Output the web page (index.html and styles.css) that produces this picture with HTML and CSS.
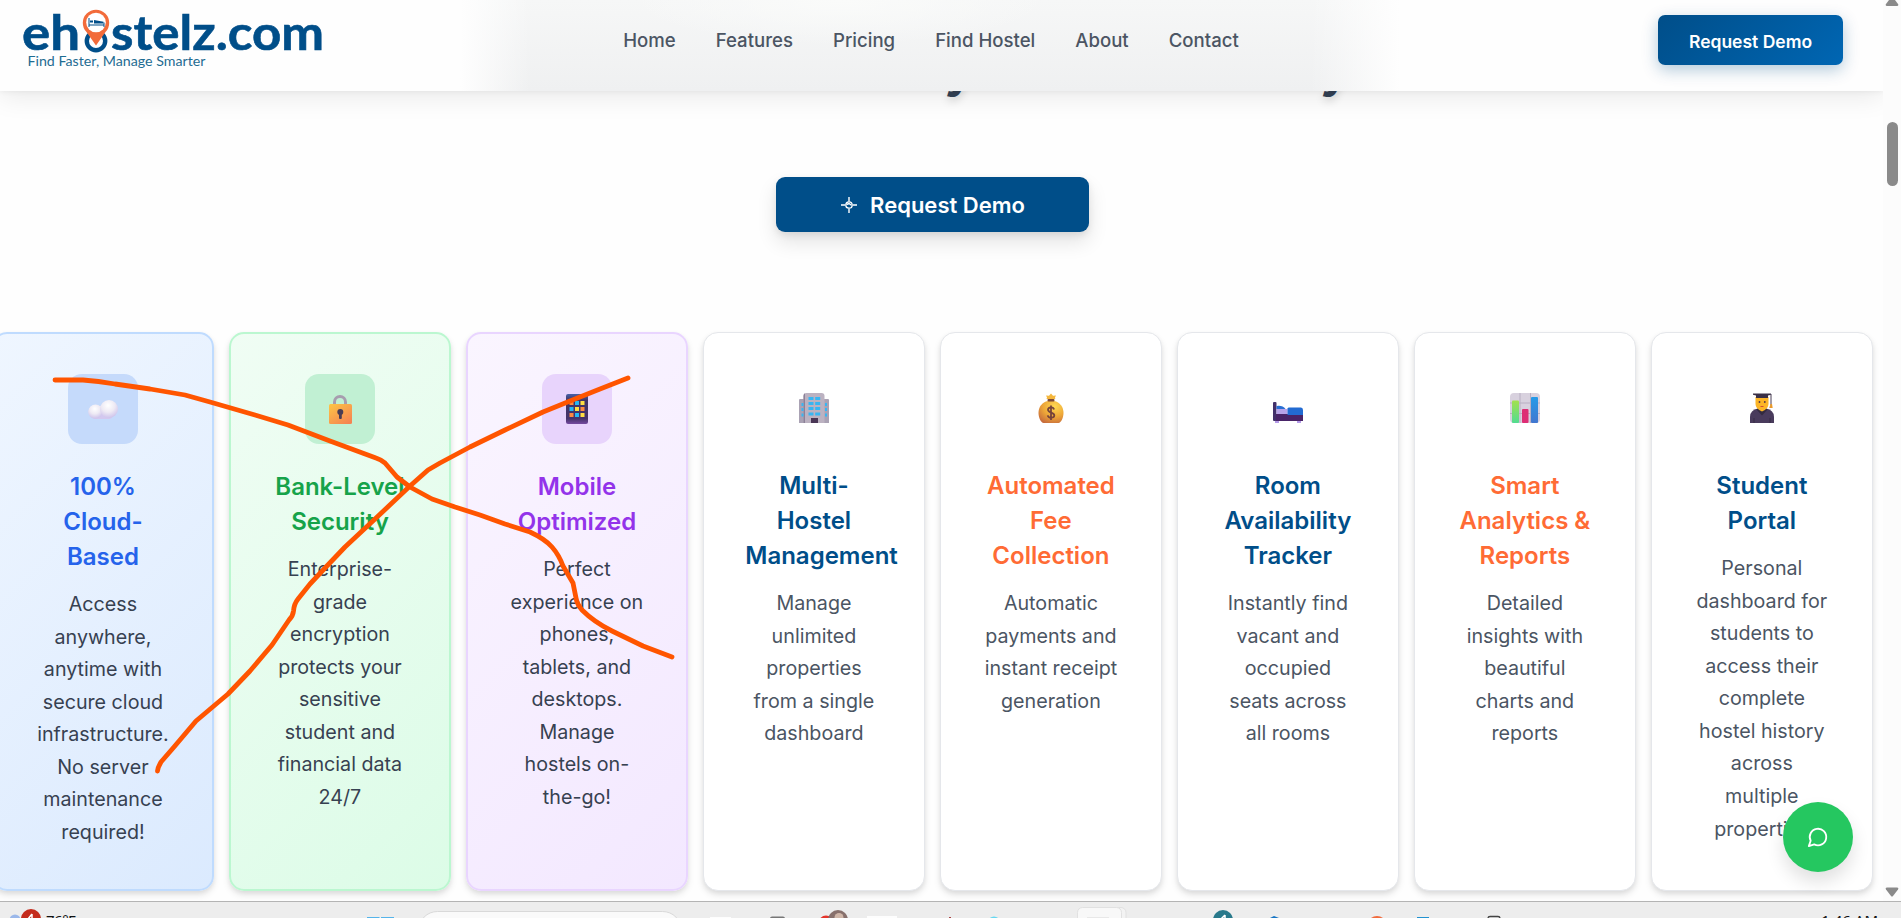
FILE: index.html
```html
<!DOCTYPE html>
<html lang="en">
<head>
<meta charset="utf-8">
<title>ehostelz.com</title>
<link rel="stylesheet" href="styles.css">
</head>
<body>
<div class="screen">
  <div class="page">
    <header class="header">
      <svg class="logo" viewBox="0 0 310 64" width="310" height="64">
        <circle cx="77" cy="37" r="9.2" fill="none" stroke="#004e89" stroke-width="4.4"/>
        <g class="logo-name">
          <text x="3" y="46" textLength="58" lengthAdjust="spacingAndGlyphs">eh</text>
          <text x="92" y="46" textLength="213" lengthAdjust="spacingAndGlyphs">stelz.com</text>
        </g>
        <path d="M77 41.500 L67.500 28 A13.200 13.200 0 1 1 86.500 28Z" fill="#f26b3a"/>
        <circle cx="77" cy="18.500" r="9.800" fill="#fff"/>
        <path d="M70 14v9M70 21h15M85 18.500V23" fill="none" stroke="#004e89" stroke-width="1"/>
        <path d="M71 16.500h3v2h-3zM75 16l9.500 1.800v1.700H75z" fill="#004e89"/>
        <text class="logo-tag" x="8.500" y="61.500" textLength="178" lengthAdjust="spacingAndGlyphs">Find Faster, Manage Smarter</text>
      </svg>
      <nav class="nav">
        <a>Home</a><a>Features</a><a>Pricing</a><a>Find Hostel</a><a>About</a><a>Contact</a>
      </nav>
      <a class="header-cta">Request Demo</a>
    </header>

    <section class="hero">
      <div class="hero-title"><span>y</span><span>y</span></div>
      <a class="hero-cta">
        <svg width="18" height="18" viewBox="0 0 18 18" fill="none" stroke="#fff">
          <circle cx="9" cy="9" r="3.200" stroke-width="1.300"/>
          <path d="M9 1v4.500M9 12.500V17M1 9h4M13 9h4M6.500 8.500l2.500-1 2.500 1.800" stroke-width="1.400"/>
        </svg>
        Request Demo
      </a>
    </section>

    <section class="cards">
      <article class="card tinted blue">
        <div class="icon"><svg width="30" height="30" viewBox="0 0 30 30">
          <defs><radialGradient id="cl" cx=".45" cy=".3" r=".75"><stop offset="0" stop-color="#fff"/><stop offset=".5" stop-color="#eeeaf4"/><stop offset="1" stop-color="#c9bdea"/></radialGradient></defs>
          <path d="M7 25a7 7 0 1 1 4-13l7 0v13z" fill="url(#cl)"/><rect x="5" y="19" width="19" height="6" rx="3" fill="#d3c8ef"/><circle cx="7.500" cy="17.500" r="7" fill="url(#cl)"/><circle cx="21" cy="15" r="9" fill="url(#cl)"/></svg></div>
        <h3>100%<br>Cloud-<br>Based</h3>
        <p>Access<br>anywhere,<br>anytime with<br>secure cloud<br>infrastructure.<br>No server<br>maintenance<br>required!</p>
      </article>
      <article class="card tinted green">
        <div class="icon"><svg width="30" height="30" viewBox="0 0 30 30">
          <defs><linearGradient id="lk" x1="0" y1="0" x2=".8" y2="1"><stop offset="0" stop-color="#fdc645"/><stop offset="1" stop-color="#f58452"/></linearGradient></defs>
          <path d="M9.500 13V8a5.500 5.500 0 0 1 11 0v5" fill="none" stroke="#a79daf" stroke-width="3"/>
          <rect x="4" y="10" width="23" height="20" rx="1.500" fill="url(#lk)"/><circle cx="15.300" cy="18" r="3" fill="#493c55"/><rect x="14" y="18" width="2.800" height="7" rx="1" fill="#493c55"/></svg></div>
        <h3>Bank-Level<br>Security</h3>
        <p>Enterprise-<br>grade<br>encryption<br>protects your<br>sensitive<br>student and<br>financial data<br>24/7</p>
      </article>
      <article class="card tinted purple">
        <div class="icon"><svg width="30" height="30" viewBox="0 0 30 30">
          <defs><linearGradient id="ph" x1="0" y1="0" x2="0" y2="1"><stop offset="0" stop-color="#4861a8"/><stop offset=".2" stop-color="#403567"/><stop offset=".82" stop-color="#46336a"/><stop offset="1" stop-color="#754aa0"/></linearGradient></defs>
          <rect x="4" y="0" width="22" height="30" rx="2" fill="url(#ph)"/>
          <g fill="#ff8b42"><path d="M7.500 7h4v4h-4zM18.500 13h4v4h-4zM7.500 19h4v4h-4z"/></g>
          <g fill="#25b7f5"><path d="M13 7h4v4h-4zM7.500 13h4v4h-4zM13 19h4v4h-4z"/></g>
          <g fill="#ffdf43"><path d="M18.500 7h4v4h-4zM13 13h4v4h-4zM18.500 19h4v4h-4z"/></g></svg></div>
        <h3>Mobile<br>Optimized</h3>
        <p>Perfect<br>experience on<br>phones,<br>tablets, and<br>desktops.<br>Manage<br>hostels on-<br>the-go!</p>
      </article>
      <article class="card navy">
        <div class="icon"><svg width="30" height="30" viewBox="0 0 30 30">
          <path d="M0 7q0-1 1-1h28q1 0 1 1v23H0z" fill="#aaa2b4"/><path d="M4.500 30V3q0-3 3-3h15q3 0 3 3v27z" fill="#bcb2c1"/><path d="M4.500 30V3q0-2 1.500-2.700V30z" fill="#8c8198"/>
          <g fill="#38b6f2"><path d="M9.500 4h5v3h-5zM16.200 4h5v3h-5zM9.500 9h5v3h-5zM16.200 9h5v3h-5zM9.500 14h5v3h-5zM16.200 14h5v3h-5zM9.500 19.500h5v3h-5zM16.200 19.500h5v3h-5zM2.500 10H4.500v3H2.500zM2.500 15H4.500v3H2.500zM2.500 20.500H4.500v3H2.500zM26 10H28v3H26zM26 15H28v3H26zM26 20.500H28v3H26z"/></g>
          <path d="M12 25h7v5h-7z" fill="#4a3655"/></svg></div>
        <h3>Multi-<br>Hostel<br>Management</h3>
        <p>Manage<br>unlimited<br>properties<br>from a single<br>dashboard</p>
      </article>
      <article class="card orange">
        <div class="icon"><svg width="30" height="30" viewBox="0 0 30 30">
          <defs><radialGradient id="mb" cx=".65" cy=".25" r=".85"><stop offset="0" stop-color="#ffd951"/><stop offset=".55" stop-color="#eda638"/><stop offset="1" stop-color="#c66a3c"/></radialGradient></defs>
          <path d="M10.500 6L11 4.500 10 2.500l3 .2L15 .5l2 2.200 3-.2-1 2 .3 1.500z" fill="#f5b73d"/><path d="M12 8h6c6 1 9.500 6 9.500 12 0 5-2.500 9.500-5 10h-15c-2.500-.5-5-5-5-10C2.500 14 6 9 12 8z" fill="url(#mb)"/><rect x="11.500" y="6" width="7" height="2.600" rx="1" fill="#7d4935"/>
          <path d="M18 16.500c-.5-3-6-3-6 .3 0 3.400 6.300 2.200 6.300 5.500 0 3.200-6 3.200-6.600 0M15 12.500v14.500" fill="none" stroke="#75433a" stroke-width="1.800"/></svg></div>
        <h3>Automated<br>Fee<br>Collection</h3>
        <p>Automatic<br>payments and<br>instant receipt<br>generation</p>
      </article>
      <article class="card navy">
        <div class="icon"><svg width="30" height="30" viewBox="0 0 30 30">
          <path d="M2 28h4v2H2zM24 28h4v2h-4z" fill="#b49be8"/><rect x="0" y="9" width="3.500" height="19" rx="1" fill="#42306a"/><path d="M3 21h27v7H3z" fill="#492468"/>
          <path d="M3.500 16h11v5h-11z" fill="#b7a3e9"/><path d="M3.500 13q6-1 9 3h-9z" fill="#2a6fd4"/><path d="M14.500 15.500l1-1H28q2 0 2 2.500v5H14.500z" fill="#226bd2"/></svg></div>
        <h3>Room<br>Availability<br>Tracker</h3>
        <p>Instantly find<br>vacant and<br>occupied<br>seats across<br>all rooms</p>
      </article>
      <article class="card orange">
        <div class="icon"><svg width="30" height="30" viewBox="0 0 30 30">
          <defs><linearGradient id="g1" x1="0" y1="0" x2="0" y2="1"><stop offset="0" stop-color="#a3e04d"/><stop offset="1" stop-color="#52dc91"/></linearGradient><linearGradient id="g2" x1="0" y1="0" x2="0" y2="1"><stop offset="0" stop-color="#259be8"/><stop offset="1" stop-color="#4276cf"/></linearGradient></defs>
          <rect width="30" height="30" rx="4" fill="#d8d1de"/><path d="M0 10h30M0 20.500h30M10 0v30M20.500 0v30" stroke="#b8afc2" stroke-width="1" fill="none"/>
          <rect x="2" y="7.500" width="7" height="22.500" rx="1" fill="url(#g1)"/><rect x="12" y="16" width="6.500" height="14" rx="1" fill="#dd2d75"/><rect x="21" y="4" width="7" height="26" rx="1" fill="url(#g2)"/></svg></div>
        <h3>Smart<br>Analytics &amp;<br>Reports</h3>
        <p>Detailed<br>insights with<br>beautiful<br>charts and<br>reports</p>
      </article>
      <article class="card navy">
        <div class="icon"><svg width="30" height="30" viewBox="0 0 30 30">
          <path d="M3 30v-6q0-7 8-8.500h8q8 1.500 8 8.500v6z" fill="#493b5c"/><path d="M9.500 16.500l5.500 6 5.500-6-2-1.500h-7z" fill="#332a3f"/><path d="M8.500 4h13v7q0 5-6.500 7.500Q8.500 16 8.500 11z" fill="#fcb526"/>
          <path d="M6 0.500h18v1.300l-3 .7v2.500H9V2.500L6 1.800z" fill="#3a3046"/><path d="M24 1v11" stroke="#4a3e54" stroke-width="1" fill="none"/><path d="M23.500 11h1.500l.7 4h-3.500z" fill="#e99a2c"/>
          <circle cx="12.500" cy="9" r=".9" fill="#503447"/><circle cx="17.800" cy="9" r=".9" fill="#503447"/><path d="M13.500 13.500h3" stroke="#d04a36" stroke-width="1"/><path d="M7 25v5M23 25v5" stroke="#33283f" stroke-width=".8"/></svg></div>
        <h3>Student<br>Portal</h3>
        <p>Personal<br>dashboard for<br>students to<br>access their<br>complete<br>hostel history<br>across<br>multiple<br>properties</p>
      </article>
    </section>

    <a class="chat"><svg width="22" height="22" viewBox="0 0 24 24" fill="none" stroke="#fff" stroke-width="2" stroke-linecap="round" stroke-linejoin="round"><path d="M7.900 20A9 9 0 1 0 4 16.100L2 22Z"/></svg></a>

    <svg class="scribble" width="1883" height="901" viewBox="0 0 1883 901">
      <path d="M55 380L83 380Q98 381 115 384L150 389L185 395L210 402L255 415L288 425L330 441L376 458Q382 460 385 463L397 477L410 487L432 499L455 507L480 515L505 524L530 532Q545 539 552 547Q559 555 563 566L573 583L576 598Q577 604 582 610Q594 622 612 631L643 646L672 657"/>
      <path d="M628 378L600 389L575 399L543 412L505 430L470 447L440 463L428 470L410 486L375 519L345 547L325 568L310 584L298 599Q294 604 293.500 611Q293 616 289 620L272 645L250 671L228 694L196 721L174 747L161 762Q158 767 157.500 771"/>
    </svg>
  </div>

  <aside class="scrollbar">
    <svg class="arrow-up" width="14" height="7" viewBox="0 0 14 7"><path d="M7-4L13 4q1 2-1 2H2Q0 6 1 4Z" fill="#8a8a8a"/></svg>
    <div class="thumb"></div>
    <svg class="arrow-down" width="14" height="10" viewBox="0 0 14 10"><path d="M2 .5h10q2 0 1 2L8 9Q7 10 6 9L1 2.500q-1-2 1-2Z" fill="#8a8a8a"/></svg>
  </aside>

  <footer class="taskbar">
    <svg class="taskbar-art" width="1901" height="16" viewBox="0 902 1901 16">
      <circle cx="15" cy="920" r="5.500" fill="#9bb8ea"/><circle cx="31" cy="919" r="10" fill="#c42b1c"/><path d="M32 914l-4 5M32 914v5" stroke="#fff" stroke-width="1.500"/>
      <path d="M367 917h12.500v2H367zM381 917h13v2h-13z" fill="#55b4ea"/>
      <rect x="418.500" y="911.500" width="263" height="40" rx="19" fill="#fafafa" stroke="#d9d9d9"/>
      <path d="M710 917h21v2h-21zM867 916h30v3h-30z" fill="#fdfdfd"/><rect x="770" y="916.500" width="15" height="5" rx="2" fill="#777"/>
      <circle cx="826" cy="923" r="7.500" fill="#e5352b"/><circle cx="838" cy="920" r="10" fill="#87706c"/><circle cx="839" cy="917.500" r="4.500" fill="#cfb6a8"/>
      <path d="M949 917h2v2h-2z" fill="#a44"/><circle cx="994" cy="923" r="6.500" fill="#66d8f1"/>
      <rect x="1090" y="907.500" width="36" height="30" rx="5" fill="#f3f3f3" stroke="#e1e1e1"/><rect x="1077.500" y="907.500" width="44" height="40" rx="5" fill="#f8f8f8" stroke="#e1e1e1"/><path d="M1087 917h22v2h-22z" fill="#e8e8e8"/>
      <circle cx="1223" cy="920" r="10" fill="#28798b"/><path d="M1225 915l-4 4M1225 915v4" stroke="#fff" stroke-width="1.500"/>
      <path d="M1270 918l4-2 5 2z" fill="#1474c4"/><circle cx="1377" cy="926" r="10" fill="#f16b3d"/><path d="M1417 917h12v2h-12z" fill="#2292d0"/><rect x="1488" y="916.500" width="12" height="8" rx="2" fill="none" stroke="#444" stroke-width="1.400"/>
    </svg>
    <span class="weather">76°F</span>
    <span class="clock">1:46 AM</span>
  </footer>
</div>
</body>
</html>
```
FILE: styles.css
```css
* { box-sizing: border-box; }
body { margin: 0; font-family: Inter, "Liberation Sans", sans-serif; background: #fff; overflow: hidden; }
.screen { display: grid; grid-template-columns: 1883px 18px; grid-template-rows: 901px 17px; width: 1901px; height: 918px; overflow: hidden; }
.page { position: relative; overflow: hidden; background: #fefefe; }

.header {
  position: absolute; inset: 0 0 auto 0; z-index: 3; height: 91px;
  display: grid; grid-template-columns: 1fr auto 1fr; align-items: start;
  padding: 4px 40px 0 19px;
  background:
    linear-gradient(90deg, #fefefe 460px, rgba(254,254,254,0) 530px, rgba(254,254,254,0) 1310px, #fefefe 1400px),
    radial-gradient(ellipse 210px 45px at 840px 0, #fafbfa, rgba(250,251,250,0)),
    linear-gradient(#f6f7f7, #eff0f1);
  box-shadow: 0 5px 26px rgba(0,0,0,.09), 0 1px 5px rgba(0,0,0,.05);
}
.logo { display: block; overflow: visible; }
.logo-name { font: 700 48px Lato, sans-serif; fill: #004e89; stroke: #004e89; stroke-width: .6px; }
.logo-tag { font: 400 13px Lato, sans-serif; fill: #1e6c92; }
.nav { display: flex; gap: 40px; padding-top: 24px; font-size: 18.600px; line-height: 24px; font-weight: 500; color: #4b5563; }
.header-cta {
  justify-self: end; margin-top: 11px; width: 185px; height: 50px; border-radius: 7px;
  display: flex; align-items: center; justify-content: center; padding-top: 2px;
  font-size: 17.500px; font-weight: 600; color: #fff;
  background: linear-gradient(135deg, #004e89, #0066b3); box-shadow: 0 5px 16px rgba(0,78,137,.3);
}

.hero { height: 332px; padding-top: 62px; display: flex; flex-direction: column; align-items: center; }
.hero-title { width: 815px; height: 42px; display: flex; justify-content: flex-end; gap: 347px; font-size: 48px; line-height: 15px; font-weight: 700; color: #334155; text-shadow: 0 4px 8px rgba(0,0,0,.15); }
.hero-cta {
  margin: 73px 18px 0 0; width: 313px; height: 55px; border-radius: 9px; background: #004e89; color: #fff;
  display: flex; align-items: center; justify-content: center; gap: 12px;
  font-size: 22px; font-weight: 600; box-shadow: 0 10px 20px rgba(0,0,0,.11), 0 3px 7px rgba(0,0,0,.08);
}

.cards { display: grid; grid-template-columns: repeat(8, 221.300px); gap: 15.700px; height: 559px; margin-left: -7.700px; }
.card { border: 1px solid #e5e7eb; border-radius: 15px; padding: 40px 41px; background: #fff; text-align: center; box-shadow: 0 4px 7px rgba(0,0,0,.1), 0 2px 4px rgba(0,0,0,.05); color: #4b5563; }
.card.tinted { border-width: 2px; padding: 40px; color: #374151; }
.icon { width: 70px; height: 70px; margin: 0 auto 24.500px; border-radius: 14px; display: flex; align-items: center; justify-content: center; }
.card h3 { margin: 0 0 14.500px; font-size: 24px; line-height: 35px; font-weight: 600; }
.card p { margin: 0; font-size: 19.700px; line-height: 32.560px; white-space: nowrap; }
.navy h3 { color: #004e89; }
.orange h3 { color: #ff6b35; }
.blue { background: linear-gradient(135deg, #eff6ff, #dbeafe); border-color: #bfdbfe; }
.blue h3 { color: #2563eb; }
.blue .icon { background: #c5dafb; }
.green { background: linear-gradient(135deg, #f0fdf4, #dcfce7); border-color: #bbf7d0; }
.green h3 { color: #16a34a; }
.green .icon { background: #c1f0d3; }
.purple { background: linear-gradient(135deg, #faf5ff, #f3e8ff); border-color: #e9d5ff; }
.purple h3 { color: #9333ea; }
.purple .icon { background: #e8d4fc; }

.chat { position: absolute; left: 1783px; top: 802px; z-index: 2; width: 70px; height: 70px; border-radius: 50%; background: #25c760; display: flex; align-items: center; justify-content: center; box-shadow: 0 10px 18px rgba(0,0,0,.12); }
.scribble { position: absolute; inset: 0; z-index: 4; fill: none; stroke: #ff5500; stroke-width: 4.800; stroke-linecap: round; stroke-linejoin: round; }

.scrollbar { background: #fcfcfc; display: flex; flex-direction: column; align-items: center; justify-content: space-between; padding: 0 1px 4px 0; }
.arrow-up, .arrow-down { display: block; flex: none; }
.thumb { width: 11px; height: 64px; border-radius: 6px; background: #8a8a8a; margin: 115px 0 auto 2px; }

.taskbar { grid-column: 1 / -1; position: relative; display: flex; justify-content: space-between; align-items: flex-start; padding: 8px 23px 0 46px; background: #ededed; border-top: 1px solid #b4b4b4; overflow: hidden; font: 15px "Noto Sans", sans-serif; line-height: 20px; color: #111; }
.taskbar-art { position: absolute; left: 0; top: 0; }
.weather { letter-spacing: -.5px; }
```
